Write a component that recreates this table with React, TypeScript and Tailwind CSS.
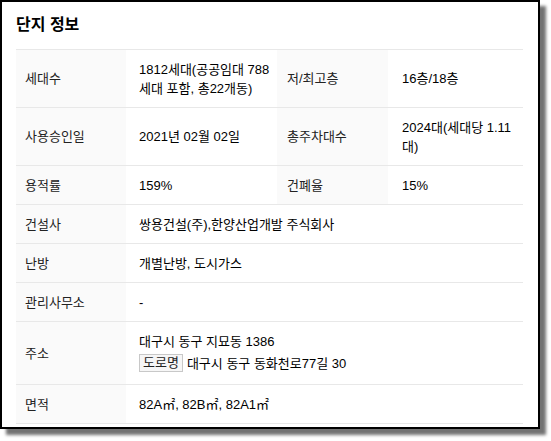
const font = { fontFamily: '"Liberation Sans", "Noto Sans CJK KR", sans-serif' };

function Label({ children, first }: { children: React.ReactNode; first?: boolean }) {
  return (
    <div
      className={`flex items-center bg-[#fafafa] text-[#222] py-[9.5px] ${first ? 'pl-[9px]' : 'pl-[10px]'}`}
    >
      {children}
    </div>
  );
}

function Value({ children, wide, first }: { children: React.ReactNode; wide?: boolean; first?: boolean }) {
  return (
    <div
      className={`flex flex-col justify-center text-black py-[9.5px] pr-[8px] ${first ? 'pl-[13px]' : 'pl-[14px]'} ${wide ? 'col-span-3' : ''}`}
    >
      {children}
    </div>
  );
}

function Row({ children }: { children: React.ReactNode }) {
  return (
    <div className="grid grid-cols-[110px_151px_111px_1fr] border-b border-[#e8e8e8]">{children}</div>
  );
}

export default function App() {
  return (
    <div className="w-[551px] h-[441px] bg-white" style={font}>
      <div className="w-[540px] h-[429px] border-2 border-black bg-white overflow-hidden shadow-[6px_6px_3px_rgba(0,0,0,0.55)]">
        <div className="h-[47px] flex items-center pl-[14px] pb-[1px]">
          <h2 className="text-[16px] font-bold text-black">단지 정보</h2>
        </div>
        <div className="ml-[14px] w-[507px] border-t border-[#e8e8e8] text-[13px] leading-[19px]">
          <Row>
            <Label first>세대수</Label>
            <Value first>
              <span className="whitespace-nowrap">1812세대(공공임대 788</span>
              <span className="whitespace-nowrap">세대 포함, 총22개동)</span>
            </Value>
            <Label>저/최고층</Label>
            <Value>16층/18층</Value>
          </Row>
          <Row>
            <Label first>사용승인일</Label>
            <Value first>2021년 02월 02일</Value>
            <Label>총주차대수</Label>
            <Value>
              <span className="whitespace-nowrap">2024대(세대당 1.11</span>
              <span>대)</span>
            </Value>
          </Row>
          <Row>
            <Label first>용적률</Label>
            <Value first>159%</Value>
            <Label>건폐율</Label>
            <Value>15%</Value>
          </Row>
          <Row>
            <Label first>건설사</Label>
            <Value first wide>쌍용건설(주),한양산업개발 주식회사</Value>
          </Row>
          <Row>
            <Label first>난방</Label>
            <Value first wide>개별난방, 도시가스</Value>
          </Row>
          <Row>
            <Label first>관리사무소</Label>
            <Value first wide>-</Value>
          </Row>
          <Row>
            <Label first>주소</Label>
            <div className="col-span-3 flex flex-col justify-center text-black py-[10px] pl-[13px]">
              <span>대구시 동구 지묘동 1386</span>
              <div className="mt-[1px] h-[22px] flex items-center gap-[4px]">
                <span className="h-[18px] px-[3px] border border-[#c8c8c8] bg-[#f6f6f6] leading-[16px] text-[#222]">
                  도로명
                </span>
                <span>대구시 동구 동화천로77길 30</span>
              </div>
            </div>
          </Row>
          <Row>
            <Label first>면적</Label>
            <Value first wide>82A㎡, 82B㎡, 82A1㎡</Value>
          </Row>
        </div>
      </div>
    </div>
  );
}
